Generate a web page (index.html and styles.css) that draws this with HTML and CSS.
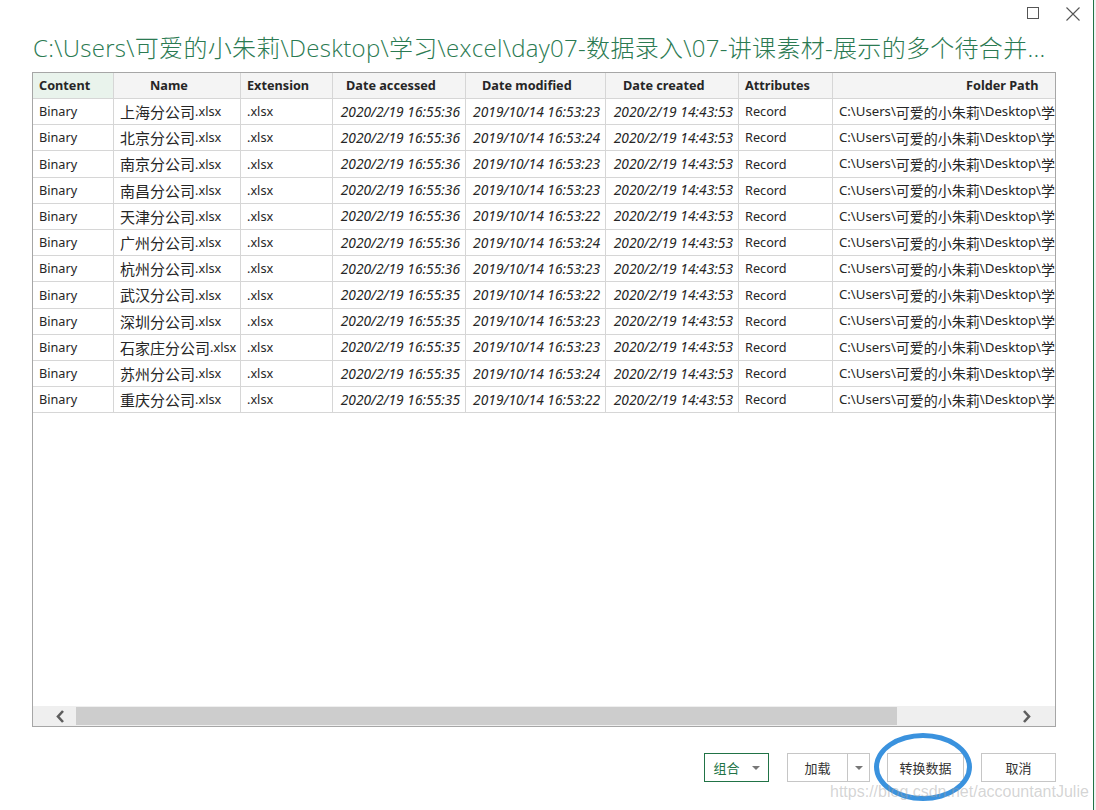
FILE: index.html
```html
<!DOCTYPE html>
<html lang="zh-CN">
<head>
<meta charset="utf-8">
<title>Folder</title>
<link rel="stylesheet" href="styles.css">
</head>
<body>
<div class="screen">
  <div class="window">
    <div class="titlebar">
      <span class="icon-max"></span>
      <svg class="icon-close" width="14" height="14" viewBox="0 0 14 14"><path d="M0.5 0.5 L13.5 13.5 M13.5 0.5 L0.5 13.5" stroke="#555" stroke-width="1.1" fill="none"/></svg>
    </div>
    <h1 class="title">C:\Users\可爱的小朱莉\Desktop\学习\excel\day07-数据录入\07-讲课素材-展示的多个待合并...</h1>

    <div class="frame">
      <div class="viewport">
        <div class="row head">
          <div class="c c-content sel">Content</div>
          <div class="c c-name">Name</div>
          <div class="c c-ext">Extension</div>
          <div class="c c-acc">Date accessed</div>
          <div class="c c-mod">Date modified</div>
          <div class="c c-cre">Date created</div>
          <div class="c c-attr">Attributes</div>
          <div class="c c-path">Folder Path</div>
        </div>
        <div class="row"><div class="c">Binary</div><div class="c"><span class="cjk">上海分公司</span>.xlsx</div><div class="c">.xlsx</div><div class="c d">2020/2/19 16:55:36</div><div class="c d">2019/10/14 16:53:23</div><div class="c d">2020/2/19 14:43:53</div><div class="c">Record</div><div class="c p">C:\Users\<span class="cjk2">可爱的小朱莉</span>\Desktop\<span class="cjk2">学</span></div></div>
        <div class="row"><div class="c">Binary</div><div class="c"><span class="cjk">北京分公司</span>.xlsx</div><div class="c">.xlsx</div><div class="c d">2020/2/19 16:55:36</div><div class="c d">2019/10/14 16:53:24</div><div class="c d">2020/2/19 14:43:53</div><div class="c">Record</div><div class="c p">C:\Users\<span class="cjk2">可爱的小朱莉</span>\Desktop\<span class="cjk2">学</span></div></div>
        <div class="row"><div class="c">Binary</div><div class="c"><span class="cjk">南京分公司</span>.xlsx</div><div class="c">.xlsx</div><div class="c d">2020/2/19 16:55:36</div><div class="c d">2019/10/14 16:53:23</div><div class="c d">2020/2/19 14:43:53</div><div class="c">Record</div><div class="c p">C:\Users\<span class="cjk2">可爱的小朱莉</span>\Desktop\<span class="cjk2">学</span></div></div>
        <div class="row"><div class="c">Binary</div><div class="c"><span class="cjk">南昌分公司</span>.xlsx</div><div class="c">.xlsx</div><div class="c d">2020/2/19 16:55:36</div><div class="c d">2019/10/14 16:53:23</div><div class="c d">2020/2/19 14:43:53</div><div class="c">Record</div><div class="c p">C:\Users\<span class="cjk2">可爱的小朱莉</span>\Desktop\<span class="cjk2">学</span></div></div>
        <div class="row"><div class="c">Binary</div><div class="c"><span class="cjk">天津分公司</span>.xlsx</div><div class="c">.xlsx</div><div class="c d">2020/2/19 16:55:36</div><div class="c d">2019/10/14 16:53:22</div><div class="c d">2020/2/19 14:43:53</div><div class="c">Record</div><div class="c p">C:\Users\<span class="cjk2">可爱的小朱莉</span>\Desktop\<span class="cjk2">学</span></div></div>
        <div class="row"><div class="c">Binary</div><div class="c"><span class="cjk">广州分公司</span>.xlsx</div><div class="c">.xlsx</div><div class="c d">2020/2/19 16:55:36</div><div class="c d">2019/10/14 16:53:24</div><div class="c d">2020/2/19 14:43:53</div><div class="c">Record</div><div class="c p">C:\Users\<span class="cjk2">可爱的小朱莉</span>\Desktop\<span class="cjk2">学</span></div></div>
        <div class="row"><div class="c">Binary</div><div class="c"><span class="cjk">杭州分公司</span>.xlsx</div><div class="c">.xlsx</div><div class="c d">2020/2/19 16:55:36</div><div class="c d">2019/10/14 16:53:23</div><div class="c d">2020/2/19 14:43:53</div><div class="c">Record</div><div class="c p">C:\Users\<span class="cjk2">可爱的小朱莉</span>\Desktop\<span class="cjk2">学</span></div></div>
        <div class="row"><div class="c">Binary</div><div class="c"><span class="cjk">武汉分公司</span>.xlsx</div><div class="c">.xlsx</div><div class="c d">2020/2/19 16:55:35</div><div class="c d">2019/10/14 16:53:22</div><div class="c d">2020/2/19 14:43:53</div><div class="c">Record</div><div class="c p">C:\Users\<span class="cjk2">可爱的小朱莉</span>\Desktop\<span class="cjk2">学</span></div></div>
        <div class="row"><div class="c">Binary</div><div class="c"><span class="cjk">深圳分公司</span>.xlsx</div><div class="c">.xlsx</div><div class="c d">2020/2/19 16:55:35</div><div class="c d">2019/10/14 16:53:23</div><div class="c d">2020/2/19 14:43:53</div><div class="c">Record</div><div class="c p">C:\Users\<span class="cjk2">可爱的小朱莉</span>\Desktop\<span class="cjk2">学</span></div></div>
        <div class="row"><div class="c">Binary</div><div class="c"><span class="cjk">石家庄分公司</span>.xlsx</div><div class="c">.xlsx</div><div class="c d">2020/2/19 16:55:35</div><div class="c d">2019/10/14 16:53:23</div><div class="c d">2020/2/19 14:43:53</div><div class="c">Record</div><div class="c p">C:\Users\<span class="cjk2">可爱的小朱莉</span>\Desktop\<span class="cjk2">学</span></div></div>
        <div class="row"><div class="c">Binary</div><div class="c"><span class="cjk">苏州分公司</span>.xlsx</div><div class="c">.xlsx</div><div class="c d">2020/2/19 16:55:35</div><div class="c d">2019/10/14 16:53:24</div><div class="c d">2020/2/19 14:43:53</div><div class="c">Record</div><div class="c p">C:\Users\<span class="cjk2">可爱的小朱莉</span>\Desktop\<span class="cjk2">学</span></div></div>
        <div class="row"><div class="c">Binary</div><div class="c"><span class="cjk">重庆分公司</span>.xlsx</div><div class="c">.xlsx</div><div class="c d">2020/2/19 16:55:35</div><div class="c d">2019/10/14 16:53:22</div><div class="c d">2020/2/19 14:43:53</div><div class="c">Record</div><div class="c p">C:\Users\<span class="cjk2">可爱的小朱莉</span>\Desktop\<span class="cjk2">学</span></div></div>
      </div>
      <div class="hscroll">
        <span class="arrow arrow-left">
          <svg width="10" height="13" viewBox="0 0 10 13"><path d="M8 1 L3 6.5 L8 12" stroke="#5e5e5e" stroke-width="2.6" fill="none"/></svg>
        </span>
        <div class="track"><div class="thumb"></div></div>
        <span class="arrow arrow-right">
          <svg width="10" height="13" viewBox="0 0 10 13"><path d="M2 1 L7 6.5 L2 12" stroke="#5e5e5e" stroke-width="2.6" fill="none"/></svg>
        </span>
      </div>
    </div>

    <div class="footer">
      <button class="btn btn-combine">组合<span class="caret green"></span></button>
      <div class="split">
        <button class="btn-main">加载</button>
        <button class="btn-drop"><span class="caret"></span></button>
      </div>
      <button class="btn btn-transform">转换数据</button>
      <button class="btn btn-cancel">取消</button>
    </div>

    <div class="mark"></div>
    <div class="watermark">https://blog.csdn.net/accountantJulie</div>
  </div>
  <div class="edge"></div>
</div>
</body>
</html>
```

FILE: styles.css
```css
* { box-sizing: border-box; }
html, body { margin: 0; padding: 0; background: #fff; }
body {
  width: 1096px;
  height: 810px;
  overflow: hidden;
  font-family: "Noto Sans", "Noto Sans CJK SC", sans-serif;
  color: #262626;
}
.screen { display: flex; height: 810px; }
.window {
  position: relative;
  width: 1093px;
  height: 810px;
  display: flex;
  flex-direction: column;
}
.edge {
  width: 3px;
  border-left: 1px solid #217346;
  background: #f2f2f2;
}

/* title bar */
.titlebar {
  height: 30px;
  display: flex;
  justify-content: flex-end;
  align-items: flex-start;
  padding: 7px 13px 0 0;
  gap: 27px;
}
.icon-max {
  width: 12px;
  height: 12px;
  border: 1px solid #555;
  display: block;
}
.icon-close { display: block; }

.title {
  margin: 0;
  padding-left: 33px;
  height: 36px;
  line-height: 36px;
  font-weight: 300;
  font-size: 24px;
  color: #2b7a52;
  font-family: "Open Sans", "Noto Sans CJK SC", sans-serif;
  white-space: nowrap;
  overflow: hidden;
  letter-spacing: 0.3px;
}

/* grid frame */
.frame {
  margin: 6px 0 0 32px;
  width: 1024px;
  height: 655px;
  border: 1px solid #a6a6a6;
  display: flex;
  flex-direction: column;
}
.viewport {
  flex: 1;
  overflow: hidden;
}
.row {
  display: grid;
  grid-template-columns: 81px 127px 92px 133px 140px 133px 94px 336px;
  height: 26.2px;
  font-size: 12.7px;
}
.row.head { height: 26px; font-weight: 700; background: #f4f4f4; }
.c {
  border-right: 1px solid #d6d6d6;
  border-bottom: 1px solid #d6d6d6;
  padding: 0 6px;
  white-space: nowrap;
  overflow: hidden;
  display: flex;
  align-items: center;
  line-height: 1;
}
.c.sel { background: #e9f3ec; }
.c-name { padding-left: 36px; }
.c-acc { padding-left: 13px; }
.c-mod { padding-left: 16px; }
.c-cre { padding-left: 17px; }
.c-path { padding-left: 133px; border-right: none; }
.c.d { font-style: italic; font-size: 13.8px; justify-content: flex-end; padding-right: 5px; }
.c.p { border-right: none; font-size: 13.2px; }
.cjk { font-family: "Noto Sans CJK SC", sans-serif; font-size: 15px; }
.cjk2 { font-family: "Noto Sans CJK SC", sans-serif; font-size: 14px; }

/* scrollbar */
.hscroll {
  height: 20px;
  display: flex;
  background: #efefef;
  align-items: stretch;
}
.arrow {
  width: 43px;
  display: flex;
  align-items: center;
}
.arrow-left { justify-content: flex-end; padding-right: 11px; }
.arrow-right { justify-content: flex-start; padding-left: 10px; }
.track { flex: 1; display: flex; padding: 1px 0; }
.thumb { width: 821px; background: #cdcdcd; }

/* footer */
.footer {
  margin-top: 26px;
  display: flex;
  justify-content: flex-end;
  gap: 17px;
  padding-right: 37px;
}
.btn, .btn-main, .btn-drop {
  font-family: "Noto Sans CJK SC", sans-serif;
  font-size: 13px;
  background: #fff;
  color: #333;
  height: 29px;
  border: 1px solid #c6c6c6;
  padding: 0;
  display: flex;
  align-items: center;
  justify-content: center;
}
.btn-combine {
  width: 65px;
  border-color: #217346;
  color: #217346;
  gap: 12px;
  margin-right: 1px;
}
.split { display: flex; }
.btn-main { width: 61px; }
.btn-drop { width: 22px; border-left: none; }
.btn-transform { width: 77px; }
.btn-cancel { width: 75px; }
.caret {
  width: 0;
  height: 0;
  border-left: 4px solid transparent;
  border-right: 4px solid transparent;
  border-top: 4px solid #777;
}

/* overlays */
.mark {
  position: absolute;
  left: 874px;
  top: 733px;
  width: 98px;
  height: 68px;
  border: 5px solid #3a92de;
  border-radius: 50%;
}
.watermark {
  position: absolute;
  left: 830px;
  top: 783px;
  font-family: "Liberation Sans", Arial, sans-serif;
  font-size: 16px;
  line-height: 18px;
  color: rgba(160, 160, 160, 0.45);
  white-space: nowrap;
}
```
